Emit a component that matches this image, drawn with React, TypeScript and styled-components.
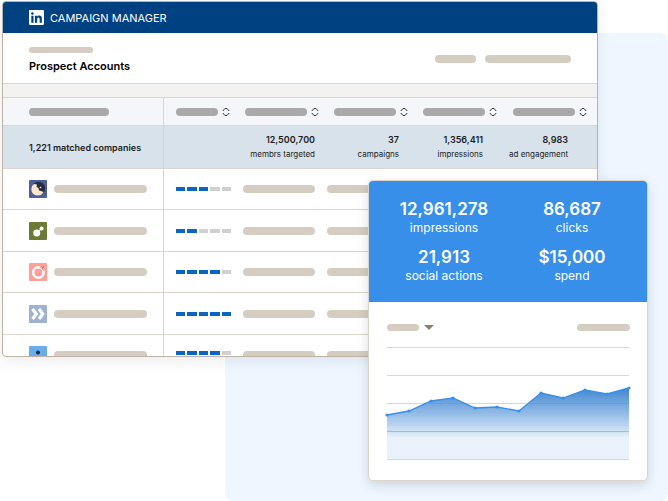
import React from "react";
import styled, { createGlobalStyle, css } from "styled-components";
import { FaLinkedin } from "react-icons/fa";

const color = {
  navy: "#004182",
  blue: "#378fe9",
  meter: "#0a66c2",
  meterOff: "#d0d0d0",
  sand: "#d6cdc2",
  stone: "#a9a9a9",
  line: "#ddd5cc",
  frame: "#bdb2a4",
  band: "#f3f2f0",
  head: "#f4f6f9",
  summary: "#d8e2eb",
  backdrop: "#eef6ff",
  grid: "#d0dae6",
};

const GlobalStyle = createGlobalStyle`
  * { box-sizing: border-box; }
  body {
    margin: 0;
    background: #fff;
    font-family: Inter, "Liberation Sans", sans-serif;
    color: #1c1c1c;
  }
`;

const Stage = styled.main`
  position: relative;
  display: grid;
  align-items: start;
  min-height: 100vh;
  overflow: hidden;
`;

const Backdrop = styled.div`
  position: absolute;
  inset: 33px 0 0 225px;
  background: ${color.backdrop};
  border-radius: 8px;
`;

const Window = styled.section`
  grid-area: 1 / 1;
  position: relative;
  margin: 1px 70px 0 2px;
  overflow: hidden;
  background: #fff;
  border: 1px solid ${color.frame};
  border-radius: 4px;
  box-shadow: 0 4px 16px rgba(0, 0, 0, 0.08);
`;

const TopBar = styled.header`
  display: flex;
  align-items: center;
  gap: 6px;
  height: 31px;
  padding: 0 26px;
  background: ${color.navy};
  color: #fff;
  font-size: 11px;

  svg {
    width: 15px;
    height: 17px;
  }
`;

const TitleBar = styled.div`
  display: flex;
  align-items: center;
  gap: 9px;
  height: 51px;
  padding: 1px 26px 0;
  border-bottom: 1px solid ${color.line};
`;

const TitleBlock = styled.div`
  display: grid;
  gap: 6px;
  margin-right: auto;
  padding-top: 2px;
`;

const Title = styled.h1`
  margin: 0;
  font-size: 11px;
  line-height: 14px;
  font-weight: 600;
  color: #000;
`;

const Band = styled.div`
  height: 14px;
  background: ${color.band};
  border-bottom: 1px solid ${color.line};
`;

const Pill = styled.span<{ $w: number; $h?: number; $tone?: string }>`
  display: block;
  flex: none;
  width: ${(p) => p.$w}px;
  height: ${(p) => p.$h ?? 8}px;
  border-radius: 4px;
  background: ${(p) => p.$tone ?? color.sand};
`;

const Table = styled.table`
  width: 100%;
  table-layout: fixed;
  border-collapse: separate;
  border-spacing: 0;
`;

const Col = styled.col<{ $w?: number }>`
  ${(p) => p.$w && css`width: ${p.$w}px;`}
`;

const cell = css`
  padding: 0;
  font-weight: 400;
  text-align: left;
  border-bottom: 1px solid ${color.line};

  &:first-child {
    padding-left: 26px;
    border-right: 1px solid ${color.line};
  }
`;

const HeadCell = styled.th`
  ${cell}
  height: 28px;
  background: ${color.head};
`;

const HeadLabel = styled.div<{ $end: number }>`
  display: flex;
  align-items: center;
  justify-content: flex-end;
  gap: 4px;
  padding-right: ${(p) => p.$end}px;
`;

const SortButton = styled.button`
  display: block;
  padding: 0;
  border: 0;
  background: none;
  color: #333;

  svg {
    display: block;
    width: 8px;
    height: 10px;
  }
`;

const SummaryCell = styled.td<{ $end?: number }>`
  ${cell}
  height: 43px;
  background: ${color.summary};
  font-size: 8px;
  line-height: 14px;
  text-align: right;
  white-space: nowrap;
  padding-right: ${(p) => p.$end ?? 0}px;

  strong {
    display: block;
    font-size: 9px;
    font-weight: 600;
  }
`;

const SummaryHead = styled.th`
  ${cell}
  background: ${color.summary};
  font-size: 9px;
  font-weight: 600;
  white-space: nowrap;
`;

const Row = styled.tr`
  height: 42px;

  &:nth-child(odd) {
    height: 41px;
  }

  &:last-child {
    height: 21px;
  }
`;

const Cell = styled.td<{ $end?: number }>`
  ${cell}
  padding-right: ${(p) => p.$end ?? 0}px;

  ${Row}:last-child & {
    vertical-align: top;
    border-bottom: 0;
  }
`;

const Clip = styled.div<{ $cut: boolean; $justify?: string }>`
  display: flex;
  align-items: center;
  justify-content: ${(p) => p.$justify ?? "flex-start"};
  gap: 7px;
  height: 18px;

  ${(p) =>
    p.$cut &&
    css`
      height: 21px;
      align-items: flex-start;
      overflow: hidden;
      padding-top: 16px;

      & > svg {
        margin-top: -5px;
      }
    `}
`;

const Logo = styled.svg`
  flex: none;
  width: 18px;
  height: 18px;
  border-radius: 1px;
`;

const Meter = styled.div`
  display: flex;
  gap: 2px;
  width: 56px;
  margin-left: 12px;
`;

const Segment = styled.span<{ $on: boolean }>`
  flex: 1;
  height: 4px;
  background: ${(p) => (p.$on ? color.meter : color.meterOff)};
`;

const Card = styled.section`
  grid-area: 1 / 1;
  position: relative;
  margin: 180px 20px 20px 368px;
  overflow: hidden;
  background: #fff;
  border: 1px solid ${color.line};
  border-radius: 5px;
  box-shadow: 0 4px 12px rgba(0, 0, 0, 0.14);
`;

const Stats = styled.dl`
  display: grid;
  grid-template-columns: 1fr 1fr;
  row-gap: 10px;
  margin: 0;
  padding: 16px 11px 19px;
  background: ${color.blue};
  color: #fff;
  text-align: center;
`;

const Stat = styled.div`
  display: flex;
  flex-direction: column-reverse;
`;

const StatLabel = styled.dt`
  font-size: 12px;
  line-height: 14px;
`;

const StatValue = styled.dd`
  margin: 0;
  font-size: 17px;
  line-height: 24px;
  font-weight: 600;
`;

const Panel = styled.div`
  padding: 22px 17px 20px 18px;
`;

const PanelBar = styled.div`
  display: flex;
  align-items: center;
  gap: 5px;
  height: 7px;
  margin-bottom: 9px;
`;

const Picker = styled.button`
  display: flex;
  align-items: center;
  gap: 5px;
  margin-right: auto;
  padding: 0;
  border: 0;
  background: none;

  svg {
    width: 10px;
    height: 5px;
  }
`;

const Chart = styled.svg`
  display: block;
  width: 100%;
  overflow: visible;
`;

const HEADERS = [
  { w: 42, end: 1 },
  { w: 62, end: 1 },
  { w: 62, end: 1 },
  { w: 62, end: 1 },
  { w: 62, end: 10 },
];

const TOTALS = [
  { value: "12,500,700", label: "membrs targeted", end: 5 },
  { value: "37", label: "campaigns", end: 10 },
  { value: "1,356,411", label: "impressions", end: 15 },
  { value: "8,983", label: "ad engagement", end: 29 },
];

const STATS = [
  { value: "12,961,278", label: "impressions" },
  { value: "86,687", label: "clicks" },
  { value: "21,913", label: "social actions" },
  { value: "$15,000", label: "spend" },
];

const LOGOS = [
  <Logo viewBox="0 0 18 18" aria-hidden="true">
    <rect width="18" height="18" fill="#4d5f98" />
    <circle cx="9.500" cy="8.500" r="6.700" fill="#282b3b" />
    <path d="M5 4C1.500 6.500 1.500 12 5 14.500c3.500 2.200 8 1 9.500-2.500l-2.500-1-2-.5-.5-2.500-2-1 .5-2.500z" fill="#fce5cd" />
    <circle cx="11.500" cy="7.500" r="0.800" fill="#fff" />
  </Logo>,
  <Logo viewBox="0 0 18 18" aria-hidden="true">
    <rect width="18" height="18" fill="#6b7a37" />
    <path d="M8 11l5-5" stroke="#fff" strokeWidth="1.300" />
    <circle cx="7.700" cy="11" r="3.500" fill="#fff" />
    <circle cx="12.600" cy="6.400" r="2" fill="#fff" />
  </Logo>,
  <Logo viewBox="0 0 18 18" aria-hidden="true">
    <rect width="18" height="18" fill="#ff9f98" />
    <circle cx="9.300" cy="9.500" r="5.200" fill="none" stroke="#fff" strokeWidth="2.500" />
    <path d="M11 3.500l4 4" stroke="#ff9f98" strokeWidth="1.500" />
    <path d="M12.500 3.500l1 1M14.500 3.200l-1 1M13.500 5.500l1-.8" stroke="#8b7440" strokeWidth="1" />
  </Logo>,
  <Logo viewBox="0 0 18 18" aria-hidden="true">
    <rect width="18" height="18" fill="#9db3cd" />
    <path d="M3.500 4L7.300 9l-3.800 5M10 4L13.800 9 10 14" fill="none" stroke="#fff" strokeWidth="3.200" />
  </Logo>,
  <Logo viewBox="0 0 18 18" aria-hidden="true">
    <rect width="18" height="18" fill="#68aeee" />
    <circle cx="9" cy="6.500" r="2" fill="#1d2b3c" />
    <path d="M4 18c0-4 2-7 5-7s5 3 5 7z" fill="#1d2b3c" />
  </Logo>,
];

const SCORES = [3, 2, 4, 5, 4];

const POINTS = [
  [0, 75], [22, 71], [44, 61], [66, 58], [88, 68], [110, 67],
  [132, 71], [154, 53], [176, 58], [198, 50], [220, 54], [242, 48],
];

const GRID_LINES = [7, 35, 63, 91, 119];

function SortIcon() {
  return (
    <svg viewBox="0 0 8 10" fill="none" stroke="currentColor" aria-hidden="true">
      <path d="M0.800 4L3 1.500h2L7.200 4M0.800 6L3 8.500h2L7.200 6" />
    </svg>
  );
}

function TrendChart() {
  const line = POINTS.map((p) => p.join(" ")).join(" L");
  return (
    <Chart viewBox="0 0 243 120" role="img" aria-label="Impressions over time">
      <defs>
        <linearGradient id="fade" gradientUnits="userSpaceOnUse" x1="0" y1="48" x2="0" y2="98">
          <stop offset="0" stopColor="#4187d2" />
          <stop offset="0.500" stopColor="#91bae5" />
          <stop offset="1" stopColor="#e9f2fb" />
        </linearGradient>
      </defs>
      {GRID_LINES.map((y) => (
        <rect key={y} x="0" y={y} width="242" height="1" fill={color.grid} />
      ))}
      <path d={`M0 119 L${line} L242 119 Z`} fill="url(#fade)" />
      <path d="M41 63.500H77M143 63.500H242M0 91.500H242" stroke="#5f8fc4" strokeOpacity="0.450" />
      <path d={`M${line}`} fill="none" stroke={color.blue} strokeWidth="1.300" />
      {POINTS.map(([x, y]) => (
        <circle key={x} cx={x} cy={y} r="1.600" fill={color.blue} />
      ))}
    </Chart>
  );
}

function AccountsTable() {
  return (
    <Table>
      <colgroup>
        <Col $w={161} />
        <Col $w={67} />
        <Col $w={89} />
        <Col $w={89} />
        <Col $w={89} />
        <Col />
      </colgroup>
      <thead>
        <tr>
          <HeadCell scope="col" aria-label="Company">
            <Pill $w={80} $tone={color.stone} />
          </HeadCell>
          {HEADERS.map((h, i) => (
            <HeadCell key={i} scope="col">
              <HeadLabel $end={h.end}>
                <Pill $w={h.w} $tone={color.stone} />
                <SortButton type="button" aria-label="Sort column">
                  <SortIcon />
                </SortButton>
              </HeadLabel>
            </HeadCell>
          ))}
        </tr>
        <tr>
          <SummaryHead scope="row">1,221 matched companies</SummaryHead>
          <SummaryCell />
          {TOTALS.map((t) => (
            <SummaryCell key={t.label} $end={t.end}>
              <strong>{t.value}</strong>
              {t.label}
            </SummaryCell>
          ))}
        </tr>
      </thead>
      <tbody>
        {SCORES.map((score, i) => {
          const cut = i === SCORES.length - 1;
          return (
            <Row key={i}>
              <Cell>
                <Clip $cut={cut}>
                  {LOGOS[i]}
                  <Pill $w={93} />
                </Clip>
              </Cell>
              <Cell>
                <Clip $cut={cut}>
                  <Meter role="img" aria-label={`${score} of 5`}>
                    {[1, 2, 3, 4, 5].map((n) => (
                      <Segment key={n} $on={n <= score} />
                    ))}
                  </Meter>
                </Clip>
              </Cell>
              {TOTALS.map((t) => (
                <Cell key={t.label} $end={t.end}>
                  <Clip $cut={cut} $justify="flex-end">
                    <Pill $w={72} />
                  </Clip>
                </Cell>
              ))}
            </Row>
          );
        })}
      </tbody>
    </Table>
  );
}

export default function App() {
  return (
    <>
      <GlobalStyle />
      <Stage>
        <Backdrop />
        <Window>
          <TopBar>
            <FaLinkedin preserveAspectRatio="none" aria-label="LinkedIn" />
            CAMPAIGN MANAGER
          </TopBar>
          <TitleBar>
            <TitleBlock>
              <Pill $w={64} $h={6} />
              <Title>Prospect Accounts</Title>
            </TitleBlock>
            <Pill $w={41} />
            <Pill $w={86} />
          </TitleBar>
          <Band />
          <AccountsTable />
        </Window>
        <Card>
          <Stats>
            {STATS.map((s) => (
              <Stat key={s.value}>
                <StatLabel>{s.label}</StatLabel>
                <StatValue>{s.value}</StatValue>
              </Stat>
            ))}
          </Stats>
          <Panel>
            <PanelBar>
              <Picker type="button" aria-label="Choose metric">
                <Pill $w={32} $h={7} />
                <svg viewBox="0 0 10 5" aria-hidden="true">
                  <path d="M0 0h10L5 5z" fill="#858760" />
                </svg>
              </Picker>
              <Pill $w={53} $h={7} />
            </PanelBar>
            <TrendChart />
          </Panel>
        </Card>
      </Stage>
    </>
  );
}
